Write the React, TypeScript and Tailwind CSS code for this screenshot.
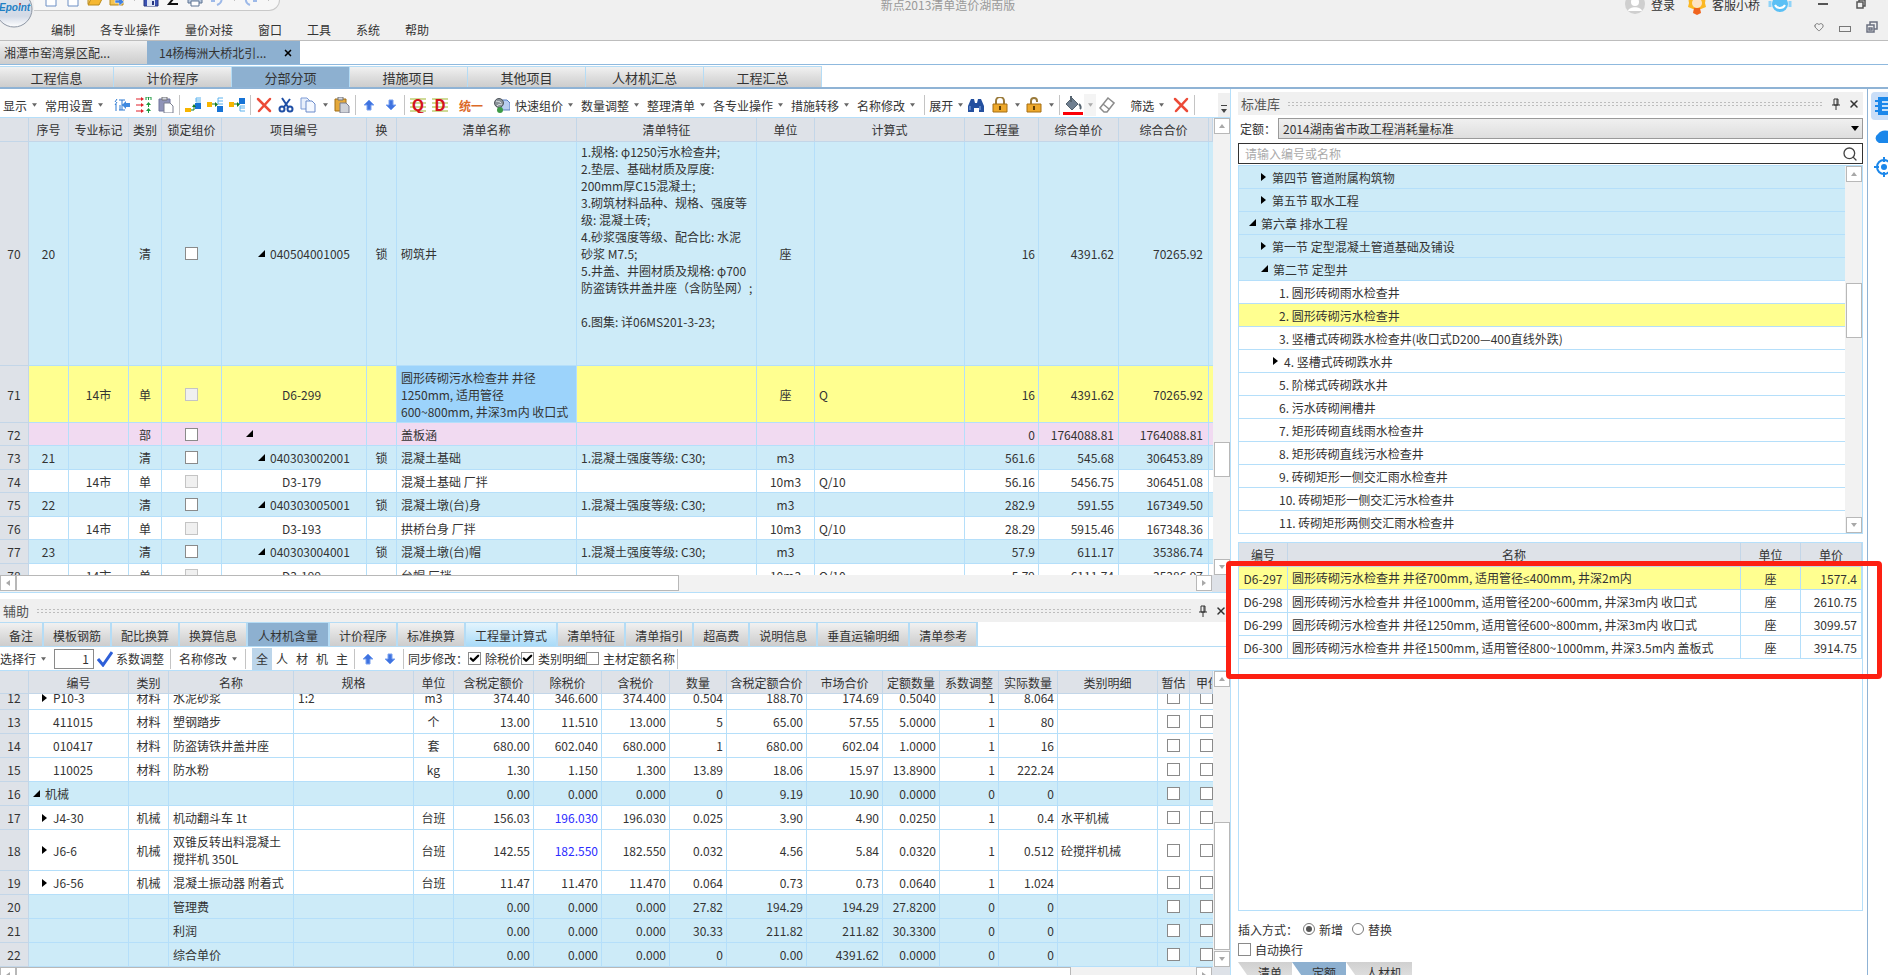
import type { ReactNode } from 'react'
import { Check, X, Search, Heart } from 'lucide-react'

const CELL = 'border-r border-b border-[#b5dffa] overflow-hidden'
const HEAD = 'border-r border-b border-[#c3d6e8] bg-[#dee2e8] p-0 font-normal whitespace-nowrap overflow-hidden'
const TAB = 'bg-linear-to-b from-[#f1f1f1] via-[#dedede] via-50% to-[#cdcdcd]'

const TONES: Record<string, string> = {
    blue: 'bg-[#cdebf8]',
    yellow: 'bg-[#ffff90]',
    pink: 'bg-[#f1daf1]',
    white: 'bg-white',
}

function Caret({ className = 'text-[#666]' }: { className?: string }) {
    return (
        <svg viewBox="0 0 6 4" className={`w-[5px] h-[4px] shrink-0 ${className}`}>
            <path d="M0 0h6L3 4z" fill="currentColor" />
        </svg>
    )
}

function Arrow({ open }: { open: boolean }) {
    return (
        <svg viewBox="0 0 8 8" className="w-2 h-2 shrink-0">
            <path d={open ? 'M7 0v7H0z' : 'M1 0l5 4-5 4z'} fill="#000" />
        </svg>
    )
}

function CheckBox({ label, checked = false, disabled = false }: { label: string; checked?: boolean; disabled?: boolean }) {
    return (
        <span className="relative inline-flex w-[13px] h-[13px] align-middle shrink-0">
            <input
                type="checkbox"
                aria-label={label}
                defaultChecked={checked}
                disabled={disabled}
                className="appearance-none w-[13px] h-[13px] border border-[#8a8a8a] bg-white disabled:border-[#c4c4c4] disabled:bg-[#f0f0f0]"
            />
            {checked && <Check className="absolute left-px top-px w-[11px] h-[11px] text-black pointer-events-none" strokeWidth={5} />}
        </span>
    )
}

/* scroll bars */

function ScrollButton({ dir }: { dir: 'up' | 'down' | 'left' | 'right' }) {
    const d = {
        up: 'M1 6h6L4 2z',
        down: 'M1 2h6L4 6z',
        left: 'M6 1v6L2 4z',
        right: 'M2 1v6l4-3z',
    }[dir]
    return (
        <button aria-label={dir} className="w-4 h-4 shrink-0 flex items-center justify-center border border-[#b8b8b8] bg-white">
            <svg viewBox="0 0 8 8" className="w-2 h-2">
                <path d={d} fill="#a8a8a8" />
            </svg>
        </button>
    )
}

function VScroll({ before, thumb, after }: { before: number; thumb: number; after: number }) {
    return (
        <div className="w-[17px] shrink-0 flex flex-col items-center bg-[#f2f2f2]">
            <ScrollButton dir="up" />
            <div style={{ flexGrow: before }} />
            <div className="w-4 border border-[#b8b8b8] bg-white" style={{ flexGrow: thumb }} />
            <div style={{ flexGrow: after }} />
            <ScrollButton dir="down" />
        </div>
    )
}

function HScroll({ thumb, after }: { thumb: number; after: number }) {
    return (
        <div className="h-[17px] shrink-0 flex bg-[#f2f2f2]">
            <ScrollButton dir="left" />
            <div className="h-4 border border-[#b8b8b8] bg-white" style={{ flexGrow: thumb }} />
            <div style={{ flexGrow: after }} />
            <ScrollButton dir="right" />
            <div className="w-[18px] bg-[#dee2e8]" />
        </div>
    )
}

/* toolbar icons */

function Svg({ children, size = 'w-4 h-4' }: { children: ReactNode; size?: string }) {
    return (
        <svg viewBox="0 0 16 16" className={`${size} shrink-0`} fill="none">
            {children}
        </svg>
    )
}

const PageIcon = () => (
    <Svg>
        <path d="M3 1h7l3 3v11H3z" fill="#fff" stroke="#6d8fc4" />
        <path d="M10 1v3h3" stroke="#6d8fc4" />
    </Svg>
)
const FolderIcon = () => (
    <Svg>
        <path d="M1 13V3h5l1 2h6v3" fill="#f7d57a" stroke="#b98a1c" />
        <path d="M1 14L5 6h11l-4 8z" fill="#f5b731" stroke="#b98a1c" />
    </Svg>
)
const ImportIcon = () => (
    <Svg>
        <path d="M1 14V3h5l1 2h7v9z" fill="#f5c451" stroke="#b98a1c" />
        <path d="M6 9h4V6l5 5-5 4v-3H6z" fill="#3f7fe0" stroke="#fff" strokeWidth="0.500" />
    </Svg>
)
const SaveIcon = () => (
    <Svg>
        <path d="M1 1h14v14H1z" fill="#3b52b4" stroke="#27367e" />
        <path d="M4 9h8v6H4z" fill="#dfe6f5" />
        <path d="M9 10h2v4H9z" fill="#27367e" />
    </Svg>
)
const PrintIcon = () => (
    <Svg>
        <path d="M4 1h8v5H4z" fill="#fff" stroke="#8096b4" />
        <path d="M1 6h14v6H1z" fill="#b8c7dc" stroke="#5e7493" />
        <path d="M4 10h8v5H4z" fill="#fff" stroke="#5e7493" />
    </Svg>
)
const LevyIcon = () => (
    <Svg>
        <path d="M3 2L1 5M3 5L1 8M2 7v7M5 3h6M8 3v10M5 13h6M6 8v5M8 8h3" stroke="#2a78d2" />
        <path d="M8 8l4-4v2h4v4h-4v2z" fill="#3f8ae0" />
    </Svg>
)
const ArrowsIcon = () => (
    <Svg>
        <path d="M0 2h6M0 8h6M0 14h6" stroke="#e0202a" />
        <path d="M5 0l3 2-3 2zM5 6l3 2-3 2zM5 12l3 2-3 2z" fill="#e0202a" />
        <path d="M10 3V0h5v3M12.500 0v3M12.500 6v4M12.500 12v4" stroke="#1c9a3e" />
        <path d="M10 8l2.500-3L15 8zM10 14l2.500-3 2.500 3z" fill="#1c9a3e" />
    </Svg>
)
const PasteIcon = ({ gold = false }: { gold?: boolean }) => (
    <Svg>
        <path d="M1 2h11v12H1z" fill={gold ? '#e5a93b' : '#8f93b8'} stroke={gold ? '#a06e17' : '#70749c'} />
        <path d="M4 0h5v3H4z" fill="#d5d8e2" stroke="#777" />
        <path d="M6 6h6l3 3v7H6z" fill={gold ? '#cfd2d8' : '#fff'} stroke="#7a7f90" />
    </Svg>
)

const INSERT = {
    down: { box: 'M10 6h6v6h-6z', bracket: 'M16 1h-5v4h5M11 3h5', from: 'M0 11h6v4H0z', line: 'M6 13h3v-3', tip: 'M7 10l2-3 2 3z' },
    mid: { box: 'M10 9h6v6h-6z', bracket: 'M16 1h-5v6h5M11 4h5', from: 'M0 5h5v5H0z', line: 'M5 7h4', tip: 'M8 5l3 2.500L8 10z' },
    right: { box: 'M10 1h6v6h-6z', bracket: 'M16 9h-5v5h5M11 11h5', from: 'M0 5h5v5H0z', line: 'M5 7h4', tip: 'M8 5l3 2.500L8 10z' },
}

const InsertIcon = ({ shift }: { shift: keyof typeof INSERT }) => (
    <Svg>
        <path d={INSERT[shift].box} fill="#1673d6" />
        <path d={INSERT[shift].bracket} stroke="#5bb2ee" />
        <path d={INSERT[shift].from} fill="#f7b500" />
        <path d={INSERT[shift].line} stroke="#157a1e" />
        <path d={INSERT[shift].tip} fill="#157a1e" />
    </Svg>
)
const RedX = () => (
    <Svg>
        <path d="M2 2l12 12M14 2L3 14" stroke="#ec4a37" strokeWidth="2.500" strokeLinecap="round" />
    </Svg>
)
const CutIcon = () => (
    <Svg>
        <path d="M4 1l6 9M12 2L6 10" stroke="#1f4fa5" strokeWidth="2" />
        <circle cx="4" cy="12" r="2.500" stroke="#1f4fa5" strokeWidth="2" />
        <circle cx="12" cy="12" r="2.500" stroke="#1f4fa5" strokeWidth="2" />
    </Svg>
)
const CopyIcon = () => (
    <Svg>
        <path d="M1 1h6l3 3v8H1z" fill="#e8effb" stroke="#7d9bd6" />
        <path d="M6 4h6l3 3v8H6z" fill="#f4f8ff" stroke="#6b8bcb" />
    </Svg>
)
const MoveIcon = ({ down = false }: { down?: boolean }) => (
    <Svg>
        <path d={down ? 'M8 13L3 8h3V3h4v5h3z' : 'M8 3l5 5h-3v5H6V8H3z'} fill="#3f73e0" stroke="#7ba2f0" />
    </Svg>
)
const LetterIcon = ({ ch }: { ch: string }) => (
    <Svg>
        <path d="M0 2h16M0 6h16M0 10h16M0 14h16" stroke="#9db52d" />
        <text x="8" y="14" textAnchor="middle" fontSize="16" fontWeight="700" fill="#d4141c">
            {ch}
        </text>
    </Svg>
)
const GlobeIcon = () => (
    <Svg>
        <path d="M7 3h6l3 3v7H7z" fill="#b9cdf0" stroke="#5a7fc0" />
        <circle cx="5" cy="6" r="4.500" fill="#8b9299" stroke="#50565c" />
        <path d="M2 4c2 1 4 0 5 2M3 9c1-2 3-1 5-2" stroke="#dfe3e6" />
        <circle cx="6" cy="13" r="3" fill="#3d9b46" />
    </Svg>
)
const FindIcon = () => (
    <Svg>
        <path d="M3 2h3l1 4h2l1-4h3l3 7v6h-5v-4H6v4H0V9z" fill="#24509f" />
        <path d="M2 9v4M12 9v4" stroke="#8fb2ea" />
    </Svg>
)
const LockIcon = ({ open = false }: { open?: boolean }) => (
    <Svg>
        <path d={open ? 'M5 7V4a3 3 0 0 1 6 0v1' : 'M4 7V4a4 4 0 0 1 8 0v3'} stroke="#9a7a3a" strokeWidth="2" />
        <path d="M1 7h14v8H1z" fill="#eea92c" stroke="#a66f12" />
        <path d="M8 9v4" stroke="#5f3d05" strokeWidth="2" />
    </Svg>
)
const BucketIcon = () => (
    <svg viewBox="0 0 20 20" className="w-5 h-5" fill="none">
        <path d="M9 3l6 6-6 6-6-6z" fill="#6f7f90" stroke="#55636f" />
        <path d="M8 7V1M16 9c2 2 2 4 1 5" stroke="#55636f" strokeWidth="2" />
        <path d="M0 17h20v3H0z" fill="#fb0007" />
    </svg>
)
const EraserIcon = () => (
    <Svg>
        <path d="M9 1l6 5-7 9H5L1 11zM4 7l6 5" stroke="#8c8c8c" strokeWidth="1.500" />
    </Svg>
)
const PinIcon = () => (
    <svg viewBox="0 0 10 12" className="w-[10px] h-3" fill="none">
        <path d="M3 1h4v6H3zM1 7h8M5 7v5M6 1v6" stroke="#333" />
    </svg>
)

const Sep = () => <span className="w-px h-5 mx-[2px] bg-[#c4c4c4] shrink-0" />

function IconBtn({ label, children, width = 'w-[22px]' }: { label: string; children: ReactNode; width?: string }) {
    return (
        <button aria-label={label} className={`${width} h-[22px] shrink-0 flex items-center justify-center`}>
            {children}
        </button>
    )
}

function TextBtn({ children, className = 'pr-2' }: { children: string; className?: string }) {
    return (
        <button className={`flex items-center gap-[5px] shrink-0 whitespace-nowrap ${className}`}>
            {children}
            <Caret />
        </button>
    )
}

const DropCaret = () => (
    <IconBtn label="更多" width="w-3">
        <Caret />
    </IconBtn>
)

/* header */

const MENUS = ['编制', '各专业操作', '量价对接', '窗口', '工具', '系统', '帮助']

function Header() {
    return (
        <header className="h-[41px] shrink-0 flex bg-[#f0f0f0] border-b border-[#bdbdbd]">
            <svg viewBox="0 0 34 28" className="w-[34px] h-7 shrink-0">
                <defs>
                    <linearGradient id="orb" x1="0" y1="0" x2="0" y2="1">
                        <stop offset="0" stopColor="#dfe5ee" />
                        <stop offset="0.7" stopColor="#d3dae6" />
                        <stop offset="1" stopColor="#ffffff" />
                    </linearGradient>
                </defs>
                <circle cx="14" cy="9" r="18" fill="url(#orb)" stroke="#8c95a3" />
                <text x="-1" y="11" fontSize="10" fontStyle="italic" fontWeight="700" fill="#1f80c4" fontFamily="Liberation Sans, sans-serif">
                    Epoint
                </text>
                <circle cx="20" cy="4" r="1" fill="#e0392b" />
            </svg>
            <div className="flex-1 min-w-0 flex flex-col">
                <div className="h-2 grid grid-cols-[1fr_auto_1fr] grid-rows-[8px] items-center whitespace-nowrap">
                    <div className="self-start justify-self-start w-[246px] h-[11px] pl-[6px] flex items-end overflow-hidden border-b border-r border-[#c9c9c9] rounded-br-xl bg-[#f7f7f7]">
                        <div className="flex items-center">
                            <IconBtn label="新建"><PageIcon /></IconBtn>
                            <IconBtn label="新建文件"><PageIcon /></IconBtn>
                            <IconBtn label="打开"><FolderIcon /></IconBtn>
                            <IconBtn label="导入"><ImportIcon /></IconBtn>
                            <DropCaret />
                            <IconBtn label="保存"><SaveIcon /></IconBtn>
                            <IconBtn label="汇总">
                                <Svg><path d="M13 3H4l4 5-4 5h9" stroke="#111" strokeWidth="2" /></Svg>
                            </IconBtn>
                            <IconBtn label="打印"><PrintIcon /></IconBtn>
                            <IconBtn label="撤销">
                                <Svg><path d="M2 10h4M8 14c5-2 6-6 2-9" stroke="#9db9e8" strokeWidth="2" /></Svg>
                            </IconBtn>
                            <DropCaret />
                            <IconBtn label="重做">
                                <Svg><path d="M10 10h4M7 14C2 12 2 8 5 5" stroke="#9db9e8" strokeWidth="2" /></Svg>
                            </IconBtn>
                            <DropCaret />
                        </div>
                    </div>
                    <h1 className="pr-[26px] text-[#999]">新点2013清单造价湖南版</h1>
                    <div className="justify-self-end w-[263px] flex items-center">
                        <svg viewBox="0 0 20 20" className="w-5 h-5 shrink-0">
                            <circle cx="10" cy="10" r="10" fill="#cfcfcf" />
                            <circle cx="10" cy="8" r="4" fill="#fff" />
                            <path d="M3 17c1-5 13-5 14 0z" fill="#fff" />
                        </svg>
                        <button className="ml-[6px] shrink-0">登录</button>
                        <svg viewBox="0 0 20 22" className="ml-3 w-5 h-[22px] shrink-0">
                            <path d="M2 10C0 2 6 0 10 0s10 2 8 10l1 4-5 2H6l-5-2z" fill="#fbb823" />
                            <circle cx="10" cy="10" r="5" fill="#fde3c4" />
                            <path d="M7 15h6l1 5-4 2-4-2z" fill="#f0641e" />
                        </svg>
                        <button className="ml-[5px] shrink-0">客服小桥</button>
                        <svg viewBox="0 0 24 20" className="ml-2 w-6 h-5 shrink-0" fill="none">
                            <circle cx="12" cy="10" r="8" fill="#5bc0f5" />
                            <path d="M2 7v6M22 7v6" stroke="#8fd3f8" strokeWidth="3" />
                            <path d="M7 11c2 4 8 4 10 0" stroke="#fff" strokeWidth="2" />
                        </svg>
                        <button aria-label="最小化" className="ml-[26px] w-[10px] h-[2px] shrink-0 bg-[#555]" />
                        <svg viewBox="0 0 10 10" className="ml-7 w-[10px] h-[10px] shrink-0" fill="none">
                            <path d="M1 3h6v6H1zM3 3V1h6v6H7" stroke="#555" strokeWidth="1.500" />
                        </svg>
                        <X className="ml-[22px] w-3 h-3 shrink-0 text-[#555]" />
                    </div>
                </div>
                <div className="flex-1 pt-[10px] pl-[17px] flex items-center">
                    <nav className="flex gap-[25px]">
                        {MENUS.map((m) => (
                            <button key={m}>{m}</button>
                        ))}
                    </nav>
                    <div className="ml-auto pr-[10px] pb-1 flex items-center gap-[15px] text-[#666]">
                        <Heart className="w-[10px] h-[10px]" />
                        <span className="w-3 h-[6px] border border-[#777] mt-1" />
                        <svg viewBox="0 0 12 12" className="w-3 h-3" fill="none">
                            <path d="M1 4h7v7H1zM4 4V1h7v7H8M3 7h3v2H3z" stroke="#6b7080" strokeWidth="1.500" />
                        </svg>
                    </div>
                </div>
            </div>
        </header>
    )
}

const PAGES = ['工程信息', '计价程序', '分部分项', '措施项目', '其他项目', '人材机汇总', '工程汇总']

function Tabs() {
    return (
        <>
            <div className="h-6 shrink-0 flex border-b border-[#8fb9de] bg-white">
                <button className={`w-[147px] pl-1 text-left ${TAB}`}>湘潭市窑湾景区配...</button>
                <button className="w-[153px] pl-3 pr-[7px] flex items-center justify-between bg-[#8db0d0]">
                    14杨梅洲大桥北引...
                    <X className="w-[10px] h-[10px] text-black" strokeWidth={4} />
                </button>
            </div>
            <div className="h-6 pt-px shrink-0 flex border-b-2 border-[#8fb3d5] bg-white text-[13px]">
                {PAGES.map((p, i) => (
                    <button
                        key={p}
                        className={`${i === 0 ? 'w-[114px]' : 'w-[118px]'} border-t border-r border-[#b5dcf5] ${i === 2 ? 'bg-[#8db0d0]' : TAB}`}
                    >
                        {p}
                    </button>
                ))}
            </div>
        </>
    )
}

function MainToolbar() {
    return (
        <div className="h-7 shrink-0 pt-1 pl-[3px] flex items-center">
            <TextBtn>显示</TextBtn>
            <TextBtn>常用设置</TextBtn>
            <IconBtn label="征"><LevyIcon /></IconBtn>
            <IconBtn label="批量"><ArrowsIcon /></IconBtn>
            <IconBtn label="剪贴板"><PasteIcon /></IconBtn>
            <Sep />
            <IconBtn label="插入"><InsertIcon shift="down" /></IconBtn>
            <IconBtn label="插入同级"><InsertIcon shift="mid" /></IconBtn>
            <IconBtn label="插入子级"><InsertIcon shift="right" /></IconBtn>
            <Sep />
            <IconBtn label="删除"><RedX /></IconBtn>
            <IconBtn label="剪切"><CutIcon /></IconBtn>
            <IconBtn label="复制"><CopyIcon /></IconBtn>
            <DropCaret />
            <IconBtn label="粘贴"><PasteIcon gold /></IconBtn>
            <Sep />
            <IconBtn label="上移"><MoveIcon /></IconBtn>
            <IconBtn label="下移"><MoveIcon down /></IconBtn>
            <Sep />
            <IconBtn label="清单"><LetterIcon ch="Q" /></IconBtn>
            <IconBtn label="定额"><LetterIcon ch="D" /></IconBtn>
            <button className="w-10 shrink-0 font-bold text-[#dc6a28]">统一</button>
            <IconBtn label="网络"><GlobeIcon /></IconBtn>
            <TextBtn className="pr-2 ml-[2px]">快速组价</TextBtn>
            <TextBtn>数量调整</TextBtn>
            <TextBtn>整理清单</TextBtn>
            <TextBtn>各专业操作</TextBtn>
            <TextBtn>措施转移</TextBtn>
            <TextBtn className="pr-0">名称修改</TextBtn>
            <span className="w-[7px]" />
            <Sep />
            <TextBtn className="pr-0 ml-[2px]">展开</TextBtn>
            <IconBtn label="查找" width="w-[26px]"><FindIcon /></IconBtn>
            <IconBtn label="锁定"><LockIcon /></IconBtn>
            <DropCaret />
            <IconBtn label="解锁"><LockIcon open /></IconBtn>
            <DropCaret />
            <Sep />
            <IconBtn label="填充"><BucketIcon /></IconBtn>
            <button aria-label="颜色" className="w-3 h-[22px] flex items-center justify-center bg-[#f4f4f4]">
                <Caret className="text-[#aaa]" />
            </button>
            <IconBtn label="擦除"><EraserIcon /></IconBtn>
            <TextBtn className="pr-[6px] ml-3">筛选</TextBtn>
            <IconBtn label="清除"><RedX /></IconBtn>
            <Sep />
            <button aria-label="更多" className="ml-auto w-3 h-6 pb-1 flex items-end justify-center bg-[#f0f0f0]">
                <svg viewBox="0 0 6 8" className="w-[6px] h-2">
                    <path d="M0 0h6v1H0zM0 4h6L3 8z" fill="#444" />
                </svg>
            </button>
        </div>
    )
}

/* bill of quantities */

type BillRow = {
    no: number
    h: string
    tone: string
    seq?: string
    mark?: string
    kind: string
    code?: string
    lock?: boolean
    name: string
    feature?: string
    unit?: string
    expr?: string
    qty: string
    price: string
    total: string
}

const WELL = `1.规格: φ1250污水检查井;
2.垫层、基础材质及厚度:
200mm厚C15混凝土;
3.砌筑材料品种、规格、强度等
级: 混凝土砖;
4.砂浆强度等级、配合比: 水泥
砂浆 M7.5;
5.井盖、井圈材质及规格: φ700
防盗铸铁井盖井座（含防坠网）;

6.图集: 详06MS201-3-23;

 `

const BILL: BillRow[] = [
    { no: 70, h: 'h-56', tone: 'blue', seq: '20', kind: '清', code: '040504001005', lock: true, name: '砌筑井', feature: WELL, unit: '座', qty: '16', price: '4391.62', total: '70265.92' },
    { no: 71, h: 'h-[57px]', tone: 'yellow', mark: '14市', kind: '单', code: 'D6-299', name: '圆形砖砌污水检查井 井径\n1250mm, 适用管径\n600~800mm, 井深3m内 收口式', unit: '座', expr: 'Q', qty: '16', price: '4391.62', total: '70265.92' },
    { no: 72, h: 'h-[23px]', tone: 'pink', kind: '部', name: '盖板涵', qty: '0', price: '1764088.81', total: '1764088.81' },
    { no: 73, h: 'h-6', tone: 'blue', seq: '21', kind: '清', code: '040303002001', lock: true, name: '混凝土基础', feature: '1.混凝土强度等级: C30;', unit: 'm3', qty: '561.6', price: '545.68', total: '306453.89' },
    { no: 74, h: 'h-[23px]', tone: 'white', mark: '14市', kind: '单', code: 'D3-179', name: '混凝土基础 厂拌', unit: '10m3', expr: 'Q/10', qty: '56.16', price: '5456.75', total: '306451.08' },
    { no: 75, h: 'h-6', tone: 'blue', seq: '22', kind: '清', code: '040303005001', lock: true, name: '混凝土墩(台)身', feature: '1.混凝土强度等级: C30;', unit: 'm3', qty: '282.9', price: '591.55', total: '167349.50' },
    { no: 76, h: 'h-[23px]', tone: 'white', mark: '14市', kind: '单', code: 'D3-193', name: '拱桥台身 厂拌', unit: '10m3', expr: 'Q/10', qty: '28.29', price: '5915.46', total: '167348.36' },
    { no: 77, h: 'h-6', tone: 'blue', seq: '23', kind: '清', code: '040303004001', lock: true, name: '混凝土墩(台)帽', feature: '1.混凝土强度等级: C30;', unit: 'm3', qty: '57.9', price: '611.17', total: '35386.74' },
    { no: 78, h: 'h-[23px]', tone: 'white', mark: '14市', kind: '单', code: 'D3-199', name: '台帽 厂拌', unit: '10m3', expr: 'Q/10', qty: '5.79', price: '6111.74', total: '35386.97' },
]

const BILL_COLS = [
    ['', 'w-[29px]'], ['序号', 'w-[40px]'], ['专业标记', 'w-[60px]'], ['类别', 'w-[33px]'], ['锁定组价', 'w-[60px]'],
    ['项目编号', 'w-[145px]'], ['换', 'w-[30px]'], ['清单名称', 'w-[180px]'], ['清单特征', 'w-[180px]'], ['单位', 'w-[58px]'],
    ['计算式', 'w-[150px]'], ['工程量', 'w-[74px]'], ['综合单价', 'w-[80px]'], ['综合合价', 'w-[90px]'], ['', ''],
]

function BillTable() {
    return (
        <table className="w-full table-fixed border-separate border-spacing-0 text-center">
            <thead>
                <tr className="h-6">
                    {BILL_COLS.map(([c, w], i) => (
                        <th key={i} className={`${HEAD} ${w}`}>{c}</th>
                    ))}
                </tr>
            </thead>
            <tbody>
                {BILL.map((r) => (
                    <tr key={r.no} className={`${r.h} ${TONES[r.tone]}`}>
                        <th className={HEAD}>{r.no}</th>
                        <td className={CELL}>{r.seq}</td>
                        <td className={CELL}>{r.mark}</td>
                        <td className={CELL}>{r.kind}</td>
                        <td className={CELL}>
                            <div className="flex justify-center">
                                <CheckBox label={`锁定组价 ${r.no}`} disabled={r.kind === '单'} />
                            </div>
                        </td>
                        <td className={CELL}>
                            <div className={`flex items-center gap-1 ${r.kind === '单' ? 'pl-[60px]' : r.kind === '清' ? 'pl-9' : 'pl-6'}`}>
                                {r.kind !== '单' && <Arrow open />}
                                {r.code}
                            </div>
                        </td>
                        <td className={CELL}>{r.lock && '锁'}</td>
                        <td className={`${CELL} pl-1 text-left whitespace-pre ${r.no === 71 ? 'bg-[#9cd3fb]' : ''}`}>{r.name}</td>
                        <td className={`${CELL} pl-1 text-left whitespace-pre`}>{r.feature}</td>
                        <td className={CELL}>{r.unit}</td>
                        <td className={`${CELL} pl-1 text-left`}>{r.expr}</td>
                        <td className={`${CELL} pr-[3px] text-right`}>{r.qty}</td>
                        <td className={`${CELL} pr-1 text-right`}>{r.price}</td>
                        <td className={`${CELL} pr-[5px] text-right`}>{r.total}</td>
                        <td className="border-b border-[#b5dffa]" />
                    </tr>
                ))}
            </tbody>
        </table>
    )
}

/* auxiliary panel */

function DockTitle({ title }: { title: string }) {
    return (
        <div className="h-[23px] shrink-0 pl-[3px] pr-[3px] flex items-center gap-[7px] bg-[#f0f0f0]">
            <h2 className="text-[13px] text-[#555]">{title}</h2>
            <div className="flex-1 h-[6px] bg-[radial-gradient(#bdbdbd_1px,transparent_1px)] bg-[size:4px_3px]" />
            <button aria-label="固定"><PinIcon /></button>
            <button aria-label="关闭"><X className="w-3 h-3 text-[#333]" strokeWidth={3} /></button>
        </div>
    )
}

const AUX_TABS = ['备注', '模板钢筋', '配比换算', '换算信息', '人材机含量', '计价程序', '标准换算', '工程量计算式', '清单特征', '清单指引', '超高费', '说明信息', '垂直运输明细', '清单参考']

const RES_COLS = [
    ['', 'w-[29px]'], ['编号', 'w-[100px]'], ['类别', 'w-[40px]'], ['名称', 'w-[125px]'], ['规格', 'w-[120px]'], ['单位', 'w-[40px]'],
    ['含税定额价', 'w-[80px]'], ['除税价', 'w-[68px]'], ['含税价', 'w-[68px]'], ['数量', 'w-[57px]'], ['含税定额合价', 'w-[80px]'],
    ['市场合价', 'w-[76px]'], ['定额数量', 'w-[57px]'], ['系数调整', 'w-[59px]'], ['实际数量', 'w-[59px]'], ['类别明细', 'w-[100px]'],
    ['暂估', 'w-[32px]'], ['甲供', ''],
]

type ResRow = {
    no: number
    code?: string
    level?: 'closed' | 'open'
    kind?: string
    name?: string
    spec?: string
    unit?: string
    nums: string[]
    detail?: string
}

const RESOURCES: ResRow[] = [
    { no: 12, code: 'P10-3', level: 'closed', kind: '材料', name: '水泥砂浆', spec: '1:2', unit: 'm3', nums: ['374.40', '346.600', '374.400', '0.504', '188.70', '174.69', '0.5040', '1', '8.064'] },
    { no: 13, code: '411015', kind: '材料', name: '塑钢踏步', unit: '个', nums: ['13.00', '11.510', '13.000', '5', '65.00', '57.55', '5.0000', '1', '80'] },
    { no: 14, code: '010417', kind: '材料', name: '防盗铸铁井盖井座', unit: '套', nums: ['680.00', '602.040', '680.000', '1', '680.00', '602.04', '1.0000', '1', '16'] },
    { no: 15, code: '110025', kind: '材料', name: '防水粉', unit: 'kg', nums: ['1.30', '1.150', '1.300', '13.89', '18.06', '15.97', '13.8900', '1', '222.24'] },
    { no: 16, code: '机械', level: 'open', nums: ['0.00', '0.000', '0.000', '0', '9.19', '10.90', '0.0000', '0', '0'] },
    { no: 17, code: 'J4-30', level: 'closed', kind: '机械', name: '机动翻斗车 1t', unit: '台班', nums: ['156.03', '196.030', '196.030', '0.025', '3.90', '4.90', '0.0250', '1', '0.4'], detail: '水平机械' },
    { no: 18, code: 'J6-6', level: 'closed', kind: '机械', name: '双锥反转出料混凝土\n搅拌机 350L', unit: '台班', nums: ['142.55', '182.550', '182.550', '0.032', '4.56', '5.84', '0.0320', '1', '0.512'], detail: '砼搅拌机械' },
    { no: 19, code: 'J6-56', level: 'closed', kind: '机械', name: '混凝土振动器 附着式', unit: '台班', nums: ['11.47', '11.470', '11.470', '0.064', '0.73', '0.73', '0.0640', '1', '1.024'] },
    { no: 20, name: '管理费', nums: ['0.00', '0.000', '0.000', '27.82', '194.29', '194.29', '27.8200', '0', '0'] },
    { no: 21, name: '利润', nums: ['0.00', '0.000', '0.000', '30.33', '211.82', '211.82', '30.3300', '0', '0'] },
    { no: 22, name: '综合单价', nums: ['0.00', '0.000', '0.000', '0', '0.00', '4391.62', '0.0000', '0', '0'] },
]

function ResCols() {
    return (
        <colgroup>
            {RES_COLS.map(([, w], i) => (
                <col key={i} className={w} />
            ))}
        </colgroup>
    )
}

function ResourceTable() {
    return (
        <div className="flex-1 min-w-0 flex flex-col overflow-hidden">
            <table className="w-full table-fixed border-separate border-spacing-0 shrink-0">
                <ResCols />
                <thead>
                    <tr className="h-[23px]">
                        {RES_COLS.map(([c], i) => (
                            <th key={i} className={`${HEAD} ${c === '甲供' ? 'pl-[6px]' : ''}`}>{c}</th>
                        ))}
                    </tr>
                </thead>
            </table>
            <div className="flex-1 min-h-0 overflow-hidden flex flex-col justify-end">
                <table className="w-full table-fixed border-separate border-spacing-0 text-center shrink-0">
                    <ResCols />
                    <tbody>
                        {RESOURCES.map((r) => (
                            <tr key={r.no} className={`${r.no === 18 ? 'h-[41px]' : 'h-6'} ${r.kind ? 'bg-white' : 'bg-[#cdebf8]'}`}>
                                <th className={HEAD}>{r.no}</th>
                                <td className={CELL}>
                                    <div className={`flex items-center gap-1 ${r.level === 'open' ? 'pl-1' : r.level ? 'pl-3' : 'pl-6'}`}>
                                        {r.level && <Arrow open={r.level === 'open'} />}
                                        {r.code}
                                    </div>
                                </td>
                                <td className={CELL}>{r.kind}</td>
                                <td className={`${CELL} pl-1 text-left whitespace-pre`}>{r.name}</td>
                                <td className={`${CELL} pl-1 text-left`}>{r.spec}</td>
                                <td className={CELL}>{r.unit}</td>
                                {r.nums.map((n, i) => (
                                    <td
                                        key={i}
                                        className={`${CELL} pr-[3px] text-right ${i === 1 && (r.no === 17 || r.no === 18) ? 'text-[#2b2bff]' : ''}`}
                                    >
                                        {n}
                                    </td>
                                ))}
                                <td className={`${CELL} pl-[3px] text-left`}>{r.detail}</td>
                                <td className={CELL}>
                                    <div className="flex justify-center">
                                        <CheckBox label={`暂估 ${r.no}`} />
                                    </div>
                                </td>
                                <td className="border-b border-[#b5dffa] overflow-hidden">
                                    <div className="pl-[10px] flex">
                                        <CheckBox label={`甲供 ${r.no}`} />
                                    </div>
                                </td>
                            </tr>
                        ))}
                    </tbody>
                </table>
            </div>
        </div>
    )
}

function AuxPanel() {
    return (
        <section className="flex-1 min-h-0 mt-[6px] flex flex-col">
            <DockTitle title="辅助" />
            <div className="h-[25px] shrink-0 flex border-b border-[#b5dcf5]">
                {AUX_TABS.map((t) => (
                    <button
                        key={t}
                        className={`pt-px border-t border-r-2 border-[#b5dcf5] whitespace-nowrap ${
                            t === '人材机含量'
                                ? 'bg-[#8db0d0] px-[10px]'
                                : t === '工程量计算式'
                                  ? 'bg-linear-to-b from-[#e3f4fd] to-[#a9dbf8] px-[9px]'
                                  : `${TAB} px-[9px]`
                        }`}
                    >
                        {t}
                    </button>
                ))}
            </div>
            <div className="h-[23px] shrink-0 flex items-center">
                <TextBtn>选择行</TextBtn>
                <input aria-label="选择行" defaultValue="1" className="w-10 h-5 pr-1 border border-[#8a8a8a] text-right" />
                <IconBtn label="确定">
                    <Svg>
                        <path d="M1 8l5 6L15 1" stroke="#2e5fd8" strokeWidth="3" />
                    </Svg>
                </IconBtn>
                <button className="mr-1">系数调整</button>
                <Sep />
                <TextBtn className="ml-[6px] pr-[6px]">名称修改</TextBtn>
                <Sep />
                <div className="ml-1 flex">
                    {['全', '人', '材', '机', '主'].map((t) => (
                        <button key={t} className={`w-5 h-[22px] ${t === '全' ? 'bg-[#bcd5ea]' : ''}`}>{t}</button>
                    ))}
                </div>
                <Sep />
                <IconBtn label="上移"><MoveIcon /></IconBtn>
                <IconBtn label="下移"><MoveIcon down /></IconBtn>
                <Sep />
                <span className="ml-[2px]">同步修改：</span>
                <label className="flex items-center gap-1"><CheckBox label="除税价" checked />除税价</label>
                <label className="flex items-center gap-1"><CheckBox label="类别明细" checked />类别明细</label>
                <label className="flex items-center gap-1"><CheckBox label="主材定额名称" />主材定额名称</label>
                <Sep />
            </div>
            <div className="flex-1 min-h-0 flex border-t border-[#b5dffa]">
                <ResourceTable />
                <VScroll before={135} thumb={126} after={1} />
            </div>
            <div className="h-2 shrink-0 overflow-hidden">
                <HScroll thumb={1055} after={125} />
            </div>
        </section>
    )
}

/* quota library */

type Node = { text: string; kind: 'chapter' | 'section' | 'sectionOpen' | 'item' | 'group' }

const TREE: Node[] = [
    { text: '第四节 管道附属构筑物', kind: 'section' },
    { text: '第五节 取水工程', kind: 'section' },
    { text: '第六章 排水工程', kind: 'chapter' },
    { text: '第一节 定型混凝土管道基础及铺设', kind: 'section' },
    { text: '第二节 定型井', kind: 'sectionOpen' },
    { text: '1. 圆形砖砌雨水检查井', kind: 'item' },
    { text: '2. 圆形砖砌污水检查井', kind: 'item' },
    { text: '3. 竖槽式砖砌跌水检查井(收口式D200—400直线外跌)', kind: 'item' },
    { text: '4. 竖槽式砖砌跌水井', kind: 'group' },
    { text: '5. 阶梯式砖砌跌水井', kind: 'item' },
    { text: '6. 污水砖砌闸槽井', kind: 'item' },
    { text: '7. 矩形砖砌直线雨水检查井', kind: 'item' },
    { text: '8. 矩形砖砌直线污水检查井', kind: 'item' },
    { text: '9. 砖砌矩形一侧交汇雨水检查井', kind: 'item' },
    { text: '10. 砖砌矩形一侧交汇污水检查井', kind: 'item' },
    { text: '11. 砖砌矩形两侧交汇雨水检查井', kind: 'item' },
]

const INDENT = {
    chapter: 'pl-[10px]',
    section: 'pl-[21px]',
    sectionOpen: 'pl-[22px]',
    item: 'pl-10',
    group: 'pl-[33px]',
}

const QUOTAS = [
    {
        code: 'D6-297',
        name: (
            <>
                圆形砖砌污水检查井 井径700mm, 适用管径<span className="font-['Open_Sans',sans-serif]">≤</span>400mm, 井深2m内
            </>
        ),
        price: '1577.4',
    },
    { code: 'D6-298', name: '圆形砖砌污水检查井 井径1000mm, 适用管径200~600mm, 井深3m内 收口式', price: '2610.75' },
    { code: 'D6-299', name: '圆形砖砌污水检查井 井径1250mm, 适用管径600~800mm, 井深3m内 收口式', price: '3099.57' },
    { code: 'D6-300', name: '圆形砖砌污水检查井 井径1500mm, 适用管径800~1000mm, 井深3.5m内 盖板式', price: '3914.75' },
]

function LibraryPanel() {
    return (
        <aside className="w-[637px] shrink-0 pt-[3px] pl-[7px] pr-1 flex flex-col border-r border-[#8fb3d5]">
            <DockTitle title="标准库" />
            <div className="mt-[3px] h-[21px] shrink-0 flex items-center">
                <label htmlFor="quota" className="w-10 pl-[2px] whitespace-nowrap">定额：</label>
                <div className="relative flex-1">
                    <select
                        id="quota"
                        className="appearance-none w-full h-[21px] pl-1 border border-[#9a9a9a] bg-linear-to-b from-[#f0f0f0] to-[#dedede]"
                    >
                        <option>2014湖南省市政工程消耗量标准</option>
                    </select>
                    <svg viewBox="0 0 8 5" className="absolute right-1 top-2 w-2 h-[5px] pointer-events-none">
                        <path d="M0 0h8L4 5z" />
                    </svg>
                </div>
            </div>
            <div className="mt-1 h-[21px] shrink-0 pr-1 flex items-center border border-[#333]">
                <input aria-label="搜索" placeholder="请输入编号或名称" className="flex-1 pl-[6px] outline-none placeholder:text-[#aaa]" />
                <Search className="w-4 h-4 text-[#444]" />
            </div>
            <div className="mt-px h-[369px] shrink-0 flex border border-[#b5dffa]">
                <ul className="flex-1">
                    {TREE.map((n, i) => (
                        <li
                            key={n.text}
                            className={`h-[23px] flex items-center gap-1 border-b border-[#b5dffa] ${INDENT[n.kind]} ${
                                i < 5 ? 'bg-[#cdebf8]' : i === 6 ? 'bg-[#ffff90]' : ''
                            }`}
                        >
                            {n.kind !== 'item' && <Arrow open={n.kind === 'chapter' || n.kind === 'sectionOpen'} />}
                            {n.text}
                        </li>
                    ))}
                </ul>
                <VScroll before={102} thumb={53} after={180} />
            </div>
            <div className="relative mt-2 flex-1 min-h-0 border border-[#b5dffa]">
                <table className="w-full table-fixed border-separate border-spacing-0">
                    <thead>
                        <tr className="h-6">
                            <th className={`${HEAD} w-[49px]`}>编号</th>
                            <th className={HEAD}>名称</th>
                            <th className={`${HEAD} w-[60px]`}>单位</th>
                            <th className={`${HEAD} w-[61px]`}>单价</th>
                        </tr>
                    </thead>
                    <tbody>
                        {QUOTAS.map((q, i) => (
                            <tr key={q.code} className={`h-[23px] ${i === 0 ? 'bg-[#ffff90]' : ''}`}>
                                <td className={`${CELL} text-center`}>{q.code}</td>
                                <td className={`${CELL} pl-1 whitespace-nowrap`}>{q.name}</td>
                                <td className={`${CELL} text-center`}>座</td>
                                <td className={`${CELL} pr-1 text-right`}>{q.price}</td>
                            </tr>
                        ))}
                    </tbody>
                </table>
                <div className="absolute z-10 -left-[13px] -right-5 top-[18px] h-[118px] border-[5px] border-[#fd2012] rounded pointer-events-none" />
            </div>
            <div className="mt-2 h-5 shrink-0 flex items-center">
                插入方式：
                {['新增', '替换'].map((t, i) => (
                    <label key={t} className="ml-[5px] mr-1 flex items-center gap-1">
                        <input
                            type="radio"
                            name="mode"
                            defaultChecked={i === 0}
                            className="appearance-none w-3 h-3 rounded-full border border-[#777] bg-white bg-clip-content p-[2px] checked:bg-[#555]"
                        />
                        {t}
                    </label>
                ))}
            </div>
            <label className="h-[21px] shrink-0 flex items-center gap-1">
                <CheckBox label="自动换行" />
                自动换行
            </label>
            <div className="mt-[2px] h-[13px] shrink-0 flex items-start overflow-hidden">
                {['清单', '定额', '人材机'].map((t) => (
                    <button
                        key={t}
                        className={`h-5 pl-5 pr-[10px] [clip-path:polygon(0_0,100%_0,100%_100%,14px_100%)] ${t === '定额' ? 'bg-[#8db0d0]' : 'bg-linear-to-b from-[#d0d0d0] to-[#e4e4e4]'}`}
                    >
                        {t}
                    </button>
                ))}
            </div>
        </aside>
    )
}

function SideStrip() {
    return (
        <div className="w-5 shrink-0 pt-[3px] pl-[3px] flex flex-col overflow-hidden">
            <button aria-label="文档" className="w-8 h-7 pl-1 flex items-center rounded bg-[#c9def8]">
                <svg viewBox="0 0 20 18" className="w-5 h-[18px]" fill="none">
                    <path d="M3 0h17v18H3z" fill="#1b87ea" />
                    <path d="M0 4h4M0 9h4M0 14h4" stroke="#1b87ea" strokeWidth="2" />
                    <path d="M7 5h10M7 9h10M7 13h6" stroke="#fff" strokeWidth="1.500" />
                </svg>
            </button>
            <button aria-label="云" className="mt-2 w-7 pl-[3px]">
                <svg viewBox="0 0 22 16" className="w-[22px] h-4">
                    <path d="M5 15a5 5 0 0 1-1-9 8 7 0 0 1 14 0 5 5 0 0 1-1 9z" fill="#1b87ea" />
                </svg>
            </button>
            <button aria-label="定位" className="mt-[13px] w-7 pl-[3px]">
                <svg viewBox="0 0 20 20" className="w-5 h-5" fill="none">
                    <circle cx="10" cy="10" r="7" stroke="#1b87ea" strokeWidth="2" />
                    <circle cx="10" cy="10" r="3" fill="#1b87ea" />
                    <path d="M10 0v5M10 15v5M0 10h5M15 10h5" stroke="#1b87ea" strokeWidth="2" />
                </svg>
            </button>
        </div>
    )
}

export default function App() {
    return (
        <div className="h-screen flex flex-col overflow-hidden bg-white text-[12px] leading-[17px] text-[#333] font-['Noto_Sans_CJK_SC',sans-serif]">
            <Header />
            <Tabs />
            <main className="flex-1 min-h-0 flex">
                <div className="flex-1 min-w-0 flex flex-col border-r border-[#b5dffa]">
                    <MainToolbar />
                    <section className="h-[476px] shrink-0 flex flex-col border-y border-[#b5dffa]">
                        <div className="flex-1 min-h-0 flex">
                            <div className="flex-1 min-w-0 overflow-hidden">
                                <BillTable />
                            </div>
                            <VScroll before={308} thumb={33} after={82} />
                        </div>
                        <HScroll thumb={662} after={518} />
                    </section>
                    <AuxPanel />
                </div>
                <LibraryPanel />
                <SideStrip />
            </main>
        </div>
    )
}
